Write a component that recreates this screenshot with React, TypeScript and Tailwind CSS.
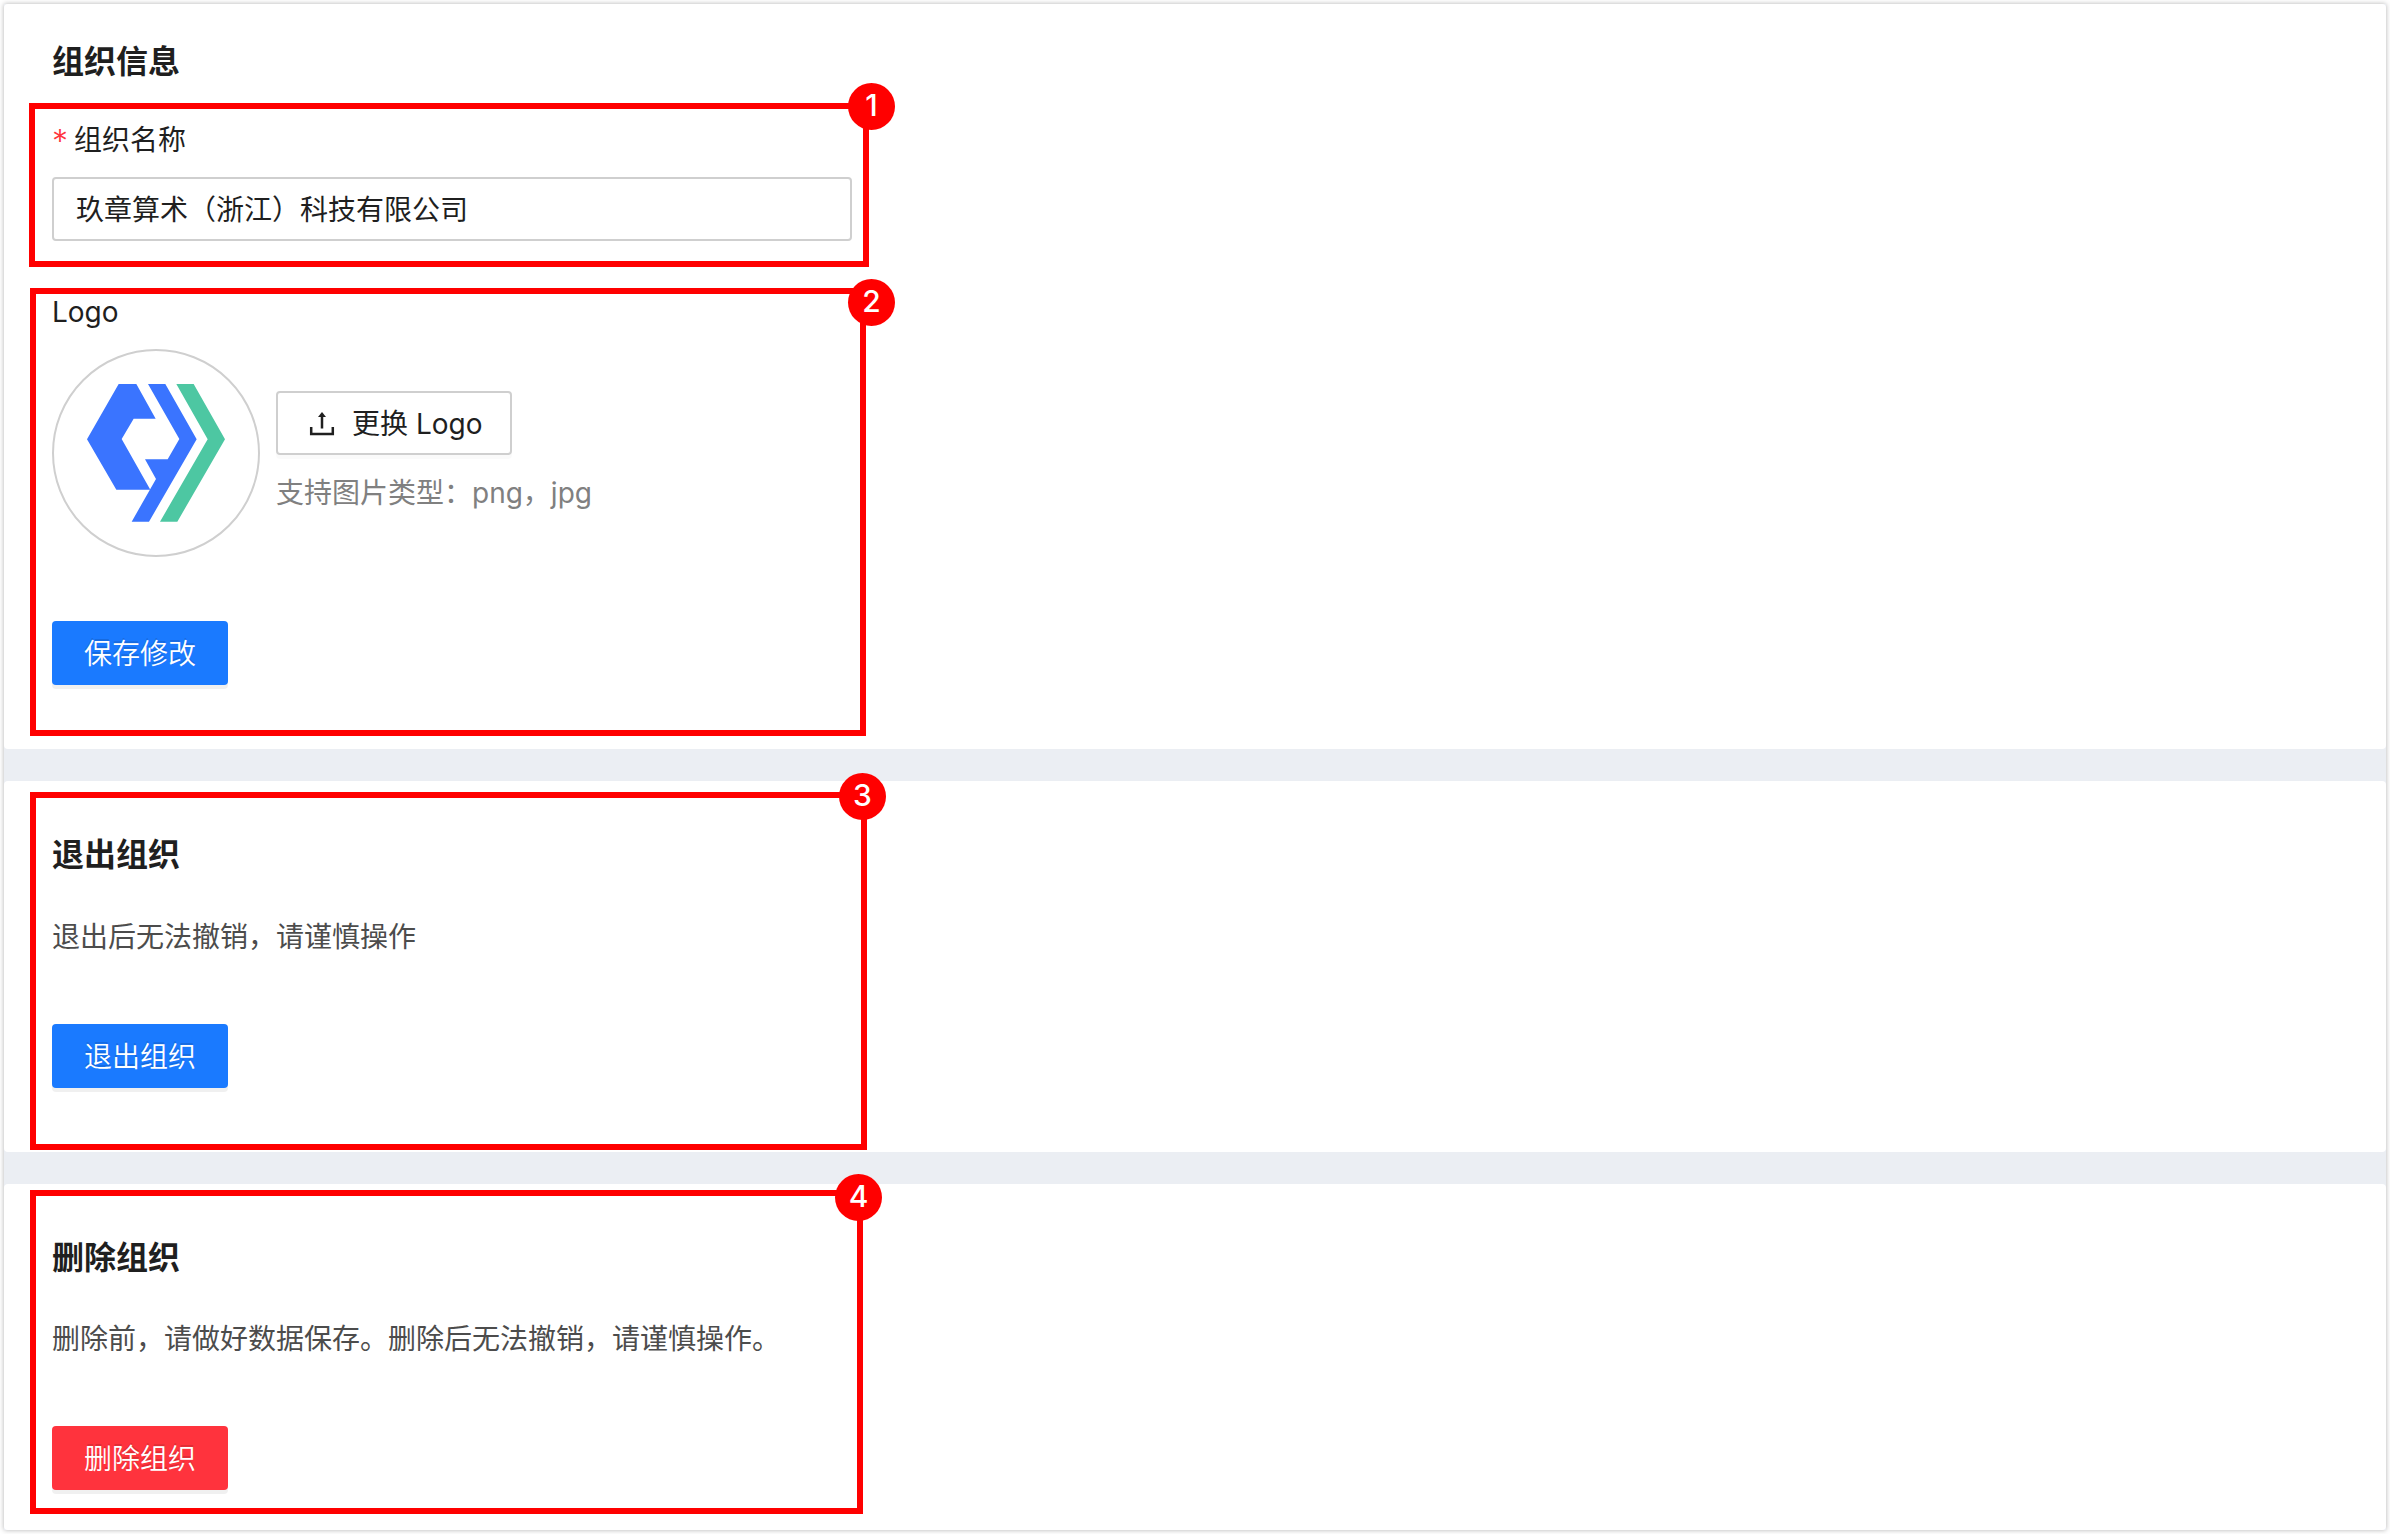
import type { ReactNode } from "react";

function Marker({ n, frame, badge }: { n: number; frame: string; badge: string }) {
  return (
    <div aria-hidden="true" className={`pointer-events-none absolute border-[6px] border-[#ff0000] ${frame}`}>
      <span
        className={`absolute flex h-[47px] w-[47px] items-start justify-center rounded-full bg-[#ff0000] pt-1 text-[30px] leading-9 font-medium text-white ${badge}`}
      >
        {n}
      </span>
    </div>
  );
}

function Title({ children }: { children: ReactNode }) {
  return <h2 className="text-[32px] leading-[48px] font-semibold">{children}</h2>;
}

function SolidButton({ color, children }: { color: string; children: ReactNode }) {
  return (
    <button
      type="button"
      className={`block h-16 rounded px-8 pt-0.5 text-[28px] leading-[44px] font-[350] text-white shadow-[0_4px_0_rgba(0,0,0,0.06)] [text-shadow:0_-2px_0_rgba(0,0,0,0.12)] ${color}`}
    >
      {children}
    </button>
  );
}

function OrgLogo() {
  return (
    <svg viewBox="42 33 612 612" className="h-full w-full" role="img" aria-label="Logo">
      <path fill="#3a74ff" d="M236 132H289L347 236H281L245 297L331 449H229L141 298Z" />
      <path fill="#3a74ff" d="M324 132H376L470 298L327 545H275L348 417L315 358H383L418 297Z" />
      <path fill="#4dc7a2" d="M409 132H461L555 298L412 545H360L503 298Z" />
    </svg>
  );
}

function UploadIcon() {
  return (
    <svg viewBox="0 0 28 28" className="h-7 w-7" fill="none" stroke="currentColor" aria-hidden="true">
      <path strokeWidth="2.5" d="M3.200 17V24H24.800V17" />
      <path strokeWidth="2.500" d="M14 18.500V6" />
      <path d="M14 2L10 7H18Z" fill="currentColor" stroke="none" />
    </svg>
  );
}

export default function App() {
  return (
    <div className="min-h-screen bg-white p-1 font-['Inter','Noto_Sans_CJK_SC',sans-serif] text-[28px] leading-[44px] text-[#1f1f1f]">
      <main className="flex min-h-[calc(100vh-8px)] flex-col gap-8 bg-[#ebeef3] shadow-[0_0_5px_rgba(0,0,0,0.3)]">
        <section className="rounded bg-white px-12 pt-[34px] pb-16">
          <Title>组织信息</Title>
          <form>
            <div className="relative mt-8 w-full max-w-[800px]">
              <label htmlFor="org-name" className="flex gap-1.5">
                <span className="pt-1 text-[32px] leading-10 font-light text-[#ff333d]">*</span>
                组织名称
              </label>
              <input
                id="org-name"
                type="text"
                defaultValue="玖章算术（浙江）科技有限公司"
                className="mt-[15px] block h-16 w-full rounded border-2 border-[#cfcfcf] bg-white px-[22px] pb-0.5 outline-none"
              />
              <Marker n={1} frame="-top-[15px] -right-[17px] -bottom-[26px] -left-[23px]" badge="-top-[26px] -right-8" />
            </div>
            <div className="relative mt-[49px] w-full max-w-[800px]">
              <div>Logo</div>
              <div className="mt-[15px] flex items-center gap-4">
                <div className="h-[208px] w-[208px] rounded-full border-2 border-[#cfcfcf]">
                  <OrgLogo />
                </div>
                <div>
                  <button
                    type="button"
                    className="flex h-16 items-center gap-4 rounded border-2 border-[#cfcfcf] pt-0.5 pr-7 pl-[30px] shadow-[0_4px_0_rgba(0,0,0,0.02)]"
                  >
                    <UploadIcon />
                    <span>更换 Logo</span>
                  </button>
                  <p className="mt-4 text-[#808080]">支持图片类型：png，jpg</p>
                </div>
              </div>
              <div className="mt-16">
                <SolidButton color="bg-[#1a7aff]">保存修改</SolidButton>
              </div>
              <Marker n={2} frame="-top-0.5 -right-[14px] -bottom-[51px] -left-[22px]" badge="-top-[15px] -right-[35px]" />
            </div>
          </form>
        </section>

        <section className="rounded bg-white px-12 pt-[50px] pb-16">
          <div className="relative w-full max-w-[800px]">
            <Title>退出组织</Title>
            <p className="mt-9 mb-[65px] text-[#4c4c4c]">退出后无法撤销，请谨慎操作</p>
            <SolidButton color="bg-[#1a7aff]">退出组织</SolidButton>
            <Marker n={3} frame="-top-[39px] -right-[15px] -bottom-[62px] -left-[22px]" badge="-top-[25px] -right-[25px]" />
          </div>
        </section>

        <section className="grow rounded bg-white px-12 pt-[50px] pb-9">
          <div className="relative w-full max-w-[800px]">
            <Title>删除组织</Title>
            <p className="mt-[35px] mb-[65px] text-[#4c4c4c]">删除前，请做好数据保存。删除后无法撤销，请谨慎操作。</p>
            <SolidButton color="bg-[#ff333d]">删除组织</SolidButton>
            <Marker n={4} frame="-top-[44px] -right-[11px] -bottom-6 -left-[22px]" badge="-top-[22px] -right-[25px]" />
          </div>
        </section>
      </main>
    </div>
  );
}
